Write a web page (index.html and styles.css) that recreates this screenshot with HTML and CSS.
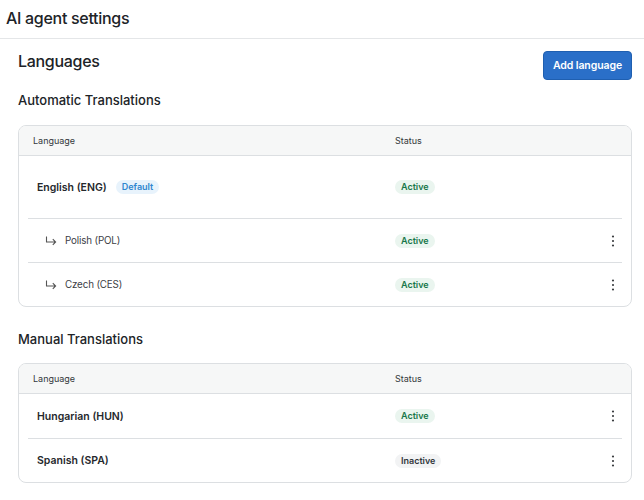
FILE: index.html
```html
<!DOCTYPE html>
<html lang="en">
<head>
  <meta charset="UTF-8">
  <title>AI agent settings</title>
  <link rel="stylesheet" href="styles.css">
</head>
<body>

<header class="topbar">
  <h1>AI agent settings</h1>
</header>

<main class="page">
  <div class="page-head">
    <h2>Languages</h2>
    <button class="btn-primary">Add language</button>
  </div>

  <!-- Automatic -->
  <h3 class="group-title">Automatic Translations</h3>
  <div class="card">
    <div class="thead">
      <div class="col-lang">Language</div>
      <div class="col-status">Status</div>
    </div>
    <div class="row row-main">
      <div class="col-lang lang-name">English (ENG) <span class="badge badge-blue">Default</span></div>
      <div class="col-status"><span class="badge badge-green">Active</span></div>
      <div class="col-menu"></div>
    </div>
    <div class="row">
      <div class="col-lang sub-name">
        <svg class="hook" width="12" height="10" viewBox="0 0 12 10"><path d="M1.5 0.5v5.5h9M7.8 3.2l2.8 2.8-2.8 2.8" fill="none" stroke="#555" stroke-width="1.1"/></svg>
        Polish (POL)
      </div>
      <div class="col-status"><span class="badge badge-green">Active</span></div>
      <div class="col-menu"><svg width="4" height="12" viewBox="0 0 4 12"><circle cx="2" cy="1.5" r="1.1"/><circle cx="2" cy="6" r="1.1"/><circle cx="2" cy="10.5" r="1.1"/></svg></div>
    </div>
    <div class="row">
      <div class="col-lang sub-name">
        <svg class="hook" width="12" height="10" viewBox="0 0 12 10"><path d="M1.5 0.5v5.5h9M7.8 3.2l2.8 2.8-2.8 2.8" fill="none" stroke="#555" stroke-width="1.1"/></svg>
        Czech (CES)
      </div>
      <div class="col-status"><span class="badge badge-green">Active</span></div>
      <div class="col-menu"><svg width="4" height="12" viewBox="0 0 4 12"><circle cx="2" cy="1.5" r="1.1"/><circle cx="2" cy="6" r="1.1"/><circle cx="2" cy="10.5" r="1.1"/></svg></div>
    </div>
  </div>

  <!-- Manual -->
  <h3 class="group-title manual">Manual Translations</h3>
  <div class="card card-manual">
    <div class="thead">
      <div class="col-lang">Language</div>
      <div class="col-status">Status</div>
    </div>
    <div class="row">
      <div class="col-lang lang-name">Hungarian (HUN)</div>
      <div class="col-status"><span class="badge badge-green">Active</span></div>
      <div class="col-menu"><svg width="4" height="12" viewBox="0 0 4 12"><circle cx="2" cy="1.5" r="1.1"/><circle cx="2" cy="6" r="1.1"/><circle cx="2" cy="10.5" r="1.1"/></svg></div>
    </div>
    <div class="row">
      <div class="col-lang lang-name">Spanish (SPA)</div>
      <div class="col-status"><span class="badge badge-grey">Inactive</span></div>
      <div class="col-menu"><svg width="4" height="12" viewBox="0 0 4 12"><circle cx="2" cy="1.5" r="1.1"/><circle cx="2" cy="6" r="1.1"/><circle cx="2" cy="10.5" r="1.1"/></svg></div>
    </div>
  </div>
</main>

</body>
</html>
```

FILE: styles.css
```css
* {
  box-sizing: border-box;
}
body {
  margin: 0;
  font-family: Inter, "Noto Sans", sans-serif;
  color: #202327;
  background: #fff;
}
.topbar {
  height: 39px;
  border-bottom: 1px solid #e4e6e8;
  padding-left: 6px;
  display: flex;
  align-items: center;
}
.topbar h1 {
  margin: 0 0 2px;
  font-size: 16px;
  font-weight: 500;
  letter-spacing: -0.3px;
}
.page {
  padding: 0 12px 0 18px;
}
.page-head {
  display: flex;
  justify-content: space-between;
  align-items: flex-start;
  height: 29px;
  margin-top: 12px;
}
.page-head h2 {
  margin: 0;
  font-size: 16px;
  line-height: 20px;
  font-weight: 500;
  letter-spacing: -0.3px;
}
.btn-primary {
  height: 29px;
  padding: 0 9px;
  font-family: inherit;
  font-size: 10.5px;
  font-weight: 600;
  letter-spacing: -0.1px;
  color: #fff;
  background: #2a6fc8;
  border: 1px solid #1f5fb0;
  border-radius: 4px;
}
.group-title {
  margin: 11px 0 16px;
  font-size: 13px;
  font-weight: 500;
  height: 18px;
  line-height: 18px;
}
.group-title.manual {
  margin: 23px 0 15px;
}
.card {
  border: 1px solid #dcdfe2;
  border-radius: 8px;
  overflow: hidden;
}
.thead {
  display: flex;
  align-items: center;
  height: 30px;
  padding-left: 14px;
  background: #f6f7f7;
  border-bottom: 1px solid #dcdfe2;
  font-size: 9px;
  color: #33373b;
}
.thead .col-lang {
  width: 362px;
}
.row {
  display: flex;
  align-items: center;
  margin: 0 9px;
  padding-left: 9px;
  height: 44px;
  border-top: 1px solid #dcdfe2;
}
.thead + .row {
  border-top: none;
}
.row-main {
  height: 62px;
}
.row .col-lang {
  width: 358px;
  display: flex;
  align-items: center;
}
.col-status {
  flex: 1;
  display: flex;
  align-items: center;
}
.col-menu {
  width: 18px;
  display: flex;
  justify-content: center;
  fill: #3a3d40;
}
.lang-name {
  font-size: 10.5px;
  font-weight: 600;
  color: #25282c;
}
.sub-name {
  font-size: 9.8px;
  letter-spacing: -0.15px;
  color: #3c4045;
  padding-left: 8px;
}
.hook {
  margin-right: 8px;
}
.badge {
  display: inline-block;
  height: 14px;
  line-height: 14px;
  padding: 0 6px;
  border-radius: 7px;
  font-size: 9px;
  font-weight: 600;
}
.badge-blue {
  margin-left: 9px;
  background: #e8f3fc;
  color: #2f86cf;
}
.badge-green {
  background: #eaf5ef;
  color: #17774a;
}
.badge-grey {
  background: #f2f3f4;
  color: #33373b;
}
```
